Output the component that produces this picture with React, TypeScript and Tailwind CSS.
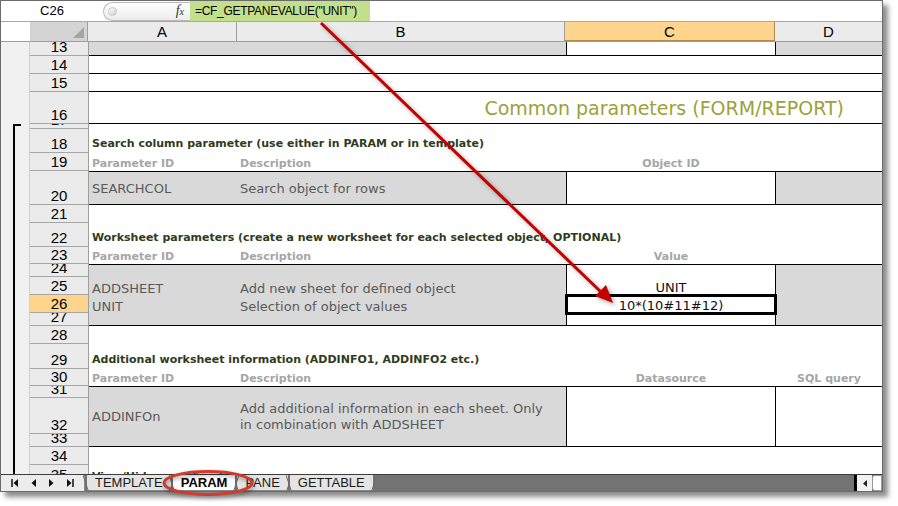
import * as React from "react"

type RowHead = { n: number; h: number; active?: boolean }

const rowHeads: RowHead[] = [
  { n: 13, h: 14 },
  { n: 14, h: 18 },
  { n: 15, h: 18 },
  { n: 16, h: 32 },
  { n: 17, h: 5 },
  { n: 18, h: 24 },
  { n: 19, h: 18 },
  { n: 20, h: 34 },
  { n: 21, h: 18 },
  { n: 22, h: 24 },
  { n: 23, h: 17 },
  { n: 24, h: 13 },
  { n: 25, h: 18 },
  { n: 26, h: 18, active: true },
  { n: 27, h: 13 },
  { n: 28, h: 18 },
  { n: 29, h: 25 },
  { n: 30, h: 17 },
  { n: 31, h: 12 },
  { n: 32, h: 36 },
  { n: 33, h: 13 },
  { n: 34, h: 18 },
  { n: 35, h: 19 },
]

const cellFont = "font-['DejaVu_Sans',Verdana,sans-serif]"
const uiFont = "font-['Liberation_Sans',Arial,sans-serif]"

function SectionTitle({ h, text }: { h: number; text: string }) {
  return (
    <div className="flex items-end pb-[3px] pl-[3px]" style={{ height: h }}>
      <span className={`${cellFont} whitespace-nowrap text-[11px] font-bold leading-[13px] text-[#2f3b1c]`}>{text}</span>
    </div>
  )
}

function Labels({ h, c, d }: { h: number; c?: string; d?: string }) {
  const lbl = `${cellFont} whitespace-nowrap text-[11px] font-bold leading-[13px] text-[#a6a6a6]`
  return (
    <div className="flex items-end pb-[1px]" style={{ height: h }}>
      <div className={`w-[149px] pl-[3px] ${lbl}`}>Parameter ID</div>
      <div className={`w-[328px] pl-[2px] ${lbl}`}>Description</div>
      <div className={`w-[210px] text-center ${lbl}`}>{c}</div>
      <div className={`flex-1 text-center ${lbl}`}>{d}</div>
    </div>
  )
}

const valText = `${cellFont} whitespace-nowrap text-[13px] leading-[15px] text-[#595959]`

function Tab({ label, active }: { label: string; active?: boolean }) {
  return (
    <div
      className={`relative flex h-full items-center px-[8px] ${uiFont} text-[13px] leading-none ${
        active ? "z-10 bg-white font-bold text-black" : "bg-[#e4e4e4] text-[#1a1a1a]"
      } border-b border-[#8a8a8a]`}
    >
      <svg className="absolute left-[-4px] top-0 h-[18px] w-[6px]" viewBox="0 0 6 18">
        <path d="M0 0 L6 18" stroke="#6a6a6a" strokeWidth="1" fill="none" />
      </svg>
      {label}
      <svg className="absolute right-[-4px] top-0 h-[18px] w-[6px]" viewBox="0 0 6 18">
        <path d="M0 18 L6 0" stroke="#6a6a6a" strokeWidth="1" fill="none" />
      </svg>
    </div>
  )
}

export default function App() {
  return (
    <div className="h-[506px] w-[898px] overflow-hidden bg-white">
      <div className="relative flex h-[492px] w-[883px] flex-col border border-[#6b6b6b] bg-white shadow-[5px_5px_5px_rgba(0,0,0,0.45)]">
        {/* formula bar */}
        <div className="flex h-[21px] border-b border-[#a8a8a8]">
          <div className={`flex w-[102px] items-center justify-center ${uiFont} text-[13px] text-black`}>C26</div>
          <div className="flex w-[87px] items-center">
            <div className="flex h-[19px] flex-1 items-center rounded-l-full border border-r-0 border-[#b9b9b9] bg-gradient-to-b from-white to-[#ececec] pl-[4px] pr-[6px]">
              <div className="h-[9px] w-[9px] rounded-full border border-[#c8c8c8] bg-gradient-to-br from-white to-[#cfcfcf]" />
              <div className="flex-1" />
              <span className="font-['Liberation_Serif',serif] text-[14px] italic leading-none text-[#333]">
                f<span className="text-[10px]">x</span>
              </span>
            </div>
          </div>
          <div className={`flex w-[180px] items-center bg-[#c4df8b] pl-[5px] ${uiFont} text-[12px] tracking-[-0.3px] text-black`}>
            =CF_GETPANEVALUE("UNIT")
          </div>
          <div className="flex-1 bg-white" />
        </div>

        {/* column headers */}
        <div className={`flex h-[20px] border-b border-[#9e9e9e] ${uiFont} text-[15px] leading-none text-black`}>
          <div className="w-[29px] bg-white" />
          <div className="relative w-[58px] border-r border-[#9e9e9e] bg-[#d4d4d4]">
            <svg className="absolute bottom-[3px] right-[3px] h-[11px] w-[11px]" viewBox="0 0 11 11">
              <path d="M11 0 L11 11 L0 11 Z" fill="#a4a4a4" />
            </svg>
          </div>
          <div className="flex w-[149px] items-center justify-center border-r border-[#9e9e9e] bg-[#ebebeb]">A</div>
          <div className="flex w-[328px] items-center justify-center border-r border-[#9e9e9e] bg-[#ebebeb]">B</div>
          <div className="flex w-[210px] items-center justify-center border-r border-b border-[#b08a50] bg-[#ffd48c]">C</div>
          <div className="flex flex-1 items-center justify-center bg-[#ebebeb]">D</div>
        </div>

        {/* body */}
        <div className="flex h-[432px] overflow-hidden">
          <div className="relative w-[29px] shrink-0 border-r border-[#d0d0d0] bg-[#f1f1f1]">
            <div className="absolute left-[12px] top-[82px] h-[400px] w-[8px] border-l-2 border-t-2 border-black" />
          </div>
          <div className={`w-[59px] shrink-0 border-r border-[#9e9e9e] ${uiFont}`}>
            {rowHeads.map((r) => (
              <div
                key={r.n}
                className={`flex items-end justify-center overflow-hidden border-b border-[#a6a6a6] text-[15px] leading-[15px] text-black ${
                  r.active ? "bg-[#ffd48c]" : "bg-[#ebebeb]"
                }`}
                style={{ height: r.h }}
              >
                <span className="pb-[1px]">{r.n}</span>
              </div>
            ))}
          </div>

          <div className="flex-1">
            {/* 13 */}
            <div className="flex h-[14px] border-b border-black">
              <div className="w-[477px] bg-[#d9d9d9]" />
              <div className="w-[210px] border-x border-black bg-white" />
              <div className="flex-1 bg-[#d9d9d9]" />
            </div>
            <div className="h-[18px] border-b border-black" />
            <div className="h-[18px] border-b border-black" />
            {/* 16 */}
            <div className="flex h-[32px] items-end justify-end border-b border-black pb-[4px] pr-[38px]">
              <span className={`${cellFont} text-[19px] leading-[22px] text-[#9ea13a]`}>Common parameters (FORM/REPORT)</span>
            </div>
            <div className="h-[5px]" />
            <SectionTitle h={24} text="Search column parameter (use either in PARAM or in template)" />
            <Labels h={18} c="Object ID" />
            {/* 20 */}
            <div className="flex h-[34px] border-y border-black">
              <div className={`flex w-[149px] items-center bg-[#d9d9d9] pl-[3px] ${valText}`}>SEARCHCOL</div>
              <div className={`flex w-[328px] items-center bg-[#d9d9d9] pl-[2px] ${valText}`}>Search object for rows</div>
              <div className="w-[210px] border-x border-black bg-white" />
              <div className="flex-1 bg-[#d9d9d9]" />
            </div>
            <div className="h-[18px]" />
            <SectionTitle h={24} text="Worksheet parameters (create a new worksheet for each selected object, OPTIONAL)" />
            <Labels h={17} c="Value" />
            {/* 24-27 */}
            <div className="flex h-[62px] border-y border-black">
              <div className="w-[477px] bg-[#d9d9d9]">
                <div className="h-[13px]" />
                <div className="flex h-[18px] items-end">
                  <div className={`w-[149px] pl-[3px] ${valText}`}>ADDSHEET</div>
                  <div className={`pl-[2px] ${valText}`}>Add new sheet for defined object</div>
                </div>
                <div className="flex h-[18px] items-end">
                  <div className={`w-[149px] pl-[3px] ${valText}`}>UNIT</div>
                  <div className={`pl-[2px] ${valText}`}>Selection of object values</div>
                </div>
              </div>
              <div className="w-[210px] border-x border-black bg-white">
                <div className="h-[12px]" />
                <div className={`flex h-[18px] items-end justify-center ${cellFont} text-[13px] leading-[15px] text-[#111]`}>UNIT</div>
                <div className="relative flex h-[18px] items-end justify-center">
                  <div className="absolute -inset-x-[2px] -bottom-[2px] -top-[1px] border-[3px] border-black" />
                  <span className={`${cellFont} text-[13px] leading-[15px] text-[#111]`}>10*(10#11#12)</span>
                </div>
              </div>
              <div className="flex-1 bg-[#d9d9d9]" />
            </div>
            <div className="h-[18px]" />
            <SectionTitle h={25} text="Additional worksheet information (ADDINFO1, ADDINFO2 etc.)" />
            <Labels h={17} c="Datasource" d="SQL query" />
            {/* 31-33 */}
            <div className="flex h-[61px] border-y border-black">
              <div className={`flex w-[149px] items-center bg-[#d9d9d9] pl-[3px] ${valText}`}>ADDINFOn</div>
              <div className="flex w-[328px] items-center bg-[#d9d9d9] pl-[2px]">
                <div className={`${cellFont} text-[13px] leading-[16px] text-[#595959]`}>
                  Add additional information in each sheet. Only
                  <br />
                  in combination with ADDSHEET
                </div>
              </div>
              <div className="w-[210px] border-x border-black bg-white" />
              <div className="flex-1 bg-white" />
            </div>
            <div className="h-[18px]" />
            <div className="flex h-[19px] items-end pb-[1px] pl-[3px]">
              <span className={`${cellFont} whitespace-nowrap text-[11px] font-bold leading-[13px] text-[#2f3b1c]`}>View/Hide rows &amp; columns</span>
            </div>
          </div>
        </div>

        {/* sheet tabs */}
        <div className="relative flex h-[17px] border-t border-[#3c3c3c] bg-[#737373]">
          <div className="flex w-[84px] items-center justify-around border-r border-[#8a8a8a] bg-[#ececec] px-[4px]">
            <svg width="8" height="8" viewBox="0 0 8 8"><path d="M1 0 V8" stroke="#111" strokeWidth="1.5" /><path d="M7 0 L2.5 4 L7 8 Z" fill="#111" /></svg>
            <svg width="6" height="8" viewBox="0 0 6 8"><path d="M5 0 L0.5 4 L5 8 Z" fill="#111" /></svg>
            <svg width="6" height="8" viewBox="0 0 6 8"><path d="M1 0 L5.5 4 L1 8 Z" fill="#111" /></svg>
            <svg width="8" height="8" viewBox="0 0 8 8"><path d="M1 0 L5.5 4 L1 8 Z" fill="#111" /><path d="M7 0 V8" stroke="#111" strokeWidth="1.5" /></svg>
          </div>
          <div className="flex h-full gap-[2px] pl-[2px]">
            <Tab label="TEMPLATE" />
            <Tab label="PARAM" active />
            <Tab label="PANE" />
            <Tab label="GETTABLE" />
          </div>
          <div className="flex-1" />
          <div className="w-[3px] bg-black" />
          <div className="flex w-[15px] items-center justify-center bg-[#f2f2f2]">
            <svg width="4" height="7" viewBox="0 0 4 7"><path d="M4 0 L0 3.5 L4 7 Z" fill="#222" /></svg>
          </div>
          <div className="w-[10px] rounded-l-[3px] border border-[#9a9a9a] bg-white" />

          <svg className="pointer-events-none absolute left-[160px] top-[-7px] z-20 h-[30px] w-[94px] [filter:drop-shadow(1px_2px_2px_rgba(0,0,0,0.4))]" viewBox="0 0 94 30">
            <ellipse cx="47" cy="15" rx="44" ry="11.5" fill="none" stroke="#d23a2c" strokeWidth="3" />
          </svg>
        </div>

        {/* arrow overlay */}
        <svg className="pointer-events-none absolute left-0 top-0 z-20 h-[492px] w-[883px] [filter:drop-shadow(2px_2px_2px_rgba(0,0,0,0.35))]" viewBox="0 0 883 492">
          <line x1="320" y1="22" x2="600" y2="291" stroke="#c40000" strokeWidth="3" />
          <path d="M612 302 L594 295 L605 284 Z" fill="#c40000" />
        </svg>
      </div>
    </div>
  )
}
